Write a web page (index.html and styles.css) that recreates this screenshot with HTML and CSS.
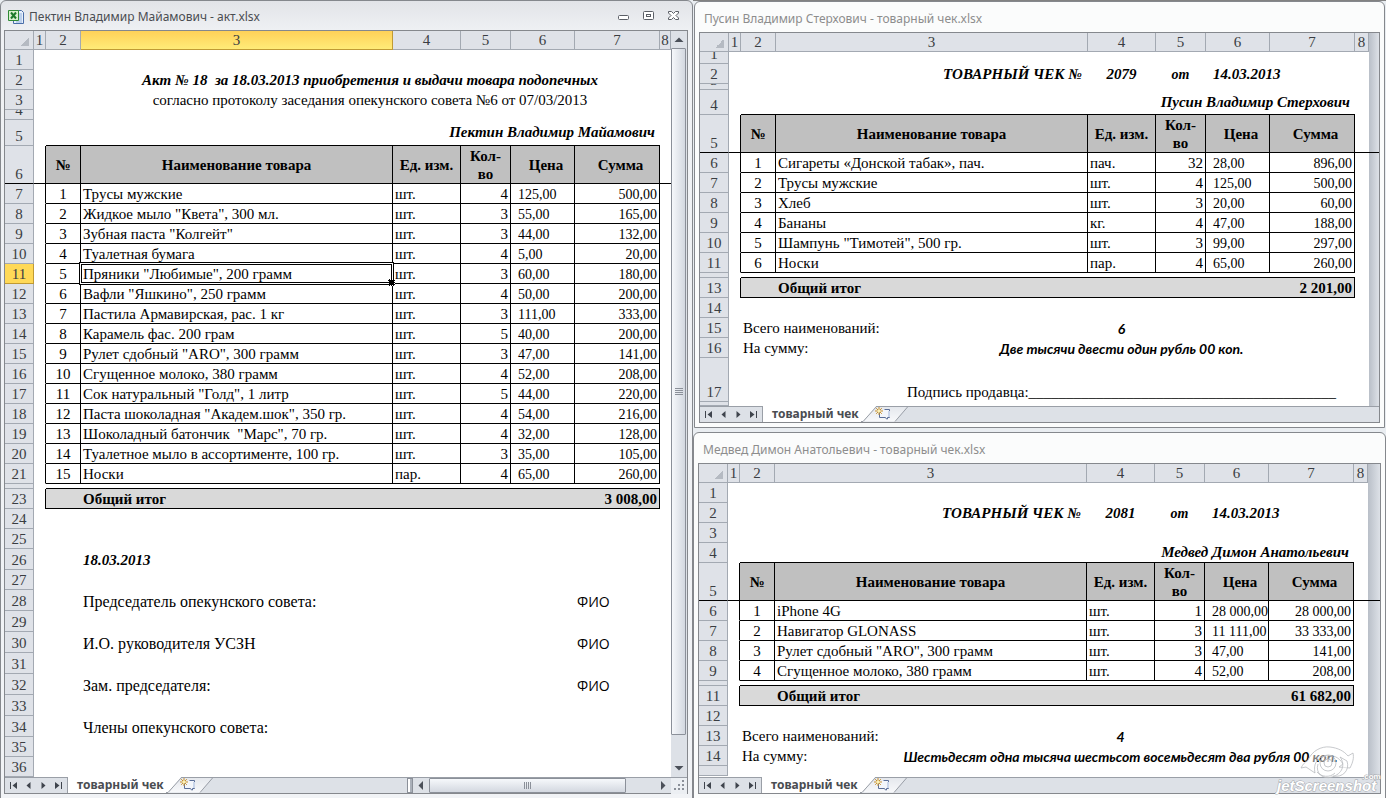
FILE: index.html
```html
<!DOCTYPE html>
<html lang="ru">
<head>
<meta charset="utf-8">
<title>Акт и товарные чеки</title>
<link rel="stylesheet" href="styles.css">
</head>
<body>
<svg width="0" height="0" class="defs" aria-hidden="true">
  <defs>
    <symbol id="i-first" viewBox="0 0 9 9"><path d="M1 1h1v7H1zM8 1v7L3.500 4.500z"/></symbol>
    <symbol id="i-prev" viewBox="0 0 9 9"><path d="M6.500 1v7L2.500 4.500z"/></symbol>
    <symbol id="i-next" viewBox="0 0 9 9"><path d="M2.500 1v7L6.500 4.500z"/></symbol>
    <symbol id="i-last" viewBox="0 0 9 9"><path d="M7 1h1v7H7zM1 1v7L5.500 4.500z"/></symbol>
    <linearGradient id="newtab" x1="0" y1="0" x2="0" y2="1"><stop offset="0" stop-color="#e4e7ec"/><stop offset="1" stop-color="#f8f9fb"/></linearGradient>
    <symbol id="i-new" viewBox="0 0 48 16">
      <path d="M0 0h15L2 16H0z" fill="#fff"/>
      <path d="M15 .5h31L34 15.500H3z" fill="url(#newtab)"/>
      <path d="M15 .5h33" stroke="#9a9fa7"/>
      <path d="M0 15.500h2L15.500.5M34 15.500 47 .5" fill="none" stroke="#9a9fa7"/>
      <path d="M18.500 5.500v6h6l1 1.500h1v-1.500h2v-8h-5" fill="#f3f6fb" stroke="#5b6f99"/>
      <path d="M27 5h2v6h-2z" fill="#c9d5ea"/>
      <path d="M18 1v8M14 5h8M15.200 2.200l5.600 5.600M20.800 2.200l-5.600 5.600" stroke="#c8902c"/>
      <circle cx="18" cy="5" r="1.500" fill="#fff3b0"/>
    </symbol>
  </defs>
</svg>

<main class="desktop">
  <section class="window active" aria-label="акт.xlsx">
    <header class="title">
      <svg class="app" viewBox="0 0 16 16" width="16" height="16">
        <path d="M5.500 1.500h8l2 2v11h-10z" fill="#e8f0fb" stroke="#4a6ea9"/>
        <path d="M10 5h4M10 7h4M10 9h4M8 11h6M8 13h6" stroke="#8fb0de"/>
        <path d="M.5 1.500h10v10H.5z" fill="#d9f0cf" stroke="#2f8a34"/>
        <path d="M3 3.500l5 6M8 3.500l-5 6" stroke="#1d7a2b" stroke-width="2"/>
      </svg>
      <h1>Пектин Владимир Майамович - акт.xlsx</h1>
      <div class="controls">
        <button aria-label="Свернуть"><svg width="13" height="12"><rect x="1.500" y="5.500" width="10" height="4" rx="1" fill="#fff" stroke="#5b5f66"/></svg></button>
        <button aria-label="Развернуть"><svg width="13" height="12"><rect x="1.500" y="1.500" width="10" height="8" rx="1" fill="#fff" stroke="#5b5f66"/><rect x="4.500" y="4.500" width="4" height="2" fill="none" stroke="#5b5f66"/></svg></button>
        <button aria-label="Закрыть"><svg width="13" height="12"><path d="M1.500 1.500h3l2 2 2-2h3v1.500L9 5.500 11.500 8v1.500h-3l-2-2-2 2h-3V8L4 5.500 1.500 3z" fill="#fff" stroke="#5b5f66"/></svg></button>
      </div>
    </header>
    <div class="pane">
      <div class="view">
        <table class="sheet">
          <colgroup><col class="rh"><col class="c1"><col class="c2"><col><col class="c4"><col class="c5"><col class="c6"><col class="c7"><col class="c8"></colgroup>
          <thead><tr><th class="corner"></th><th>1</th><th>2</th><th class="on">3</th><th>4</th><th>5</th><th>6</th><th>7</th><th>8</th></tr></thead>
          <tbody>
            <tr><th>1</th></tr>
            <tr><th>2</th><td></td><td></td><td colspan="5" class="mid em">Акт № 18&nbsp; за 18.03.2013 приобретения и выдачи товара подопечных</td></tr>
            <tr><th>3</th><td></td><td></td><td colspan="5" class="mid">согласно протоколу заседания опекунского совета №6 от 07/03/2013</td></tr>
            <tr class="h10"><th><span class="clip">4</span></th></tr>
            <tr class="h26"><th>5</th><td></td><td colspan="6" class="line end em">Пектин Владимир Майамович</td></tr>
            <tr class="head"><th>6</th><td></td><th scope="col">№</th><th scope="col">Наименование товара</th><th scope="col">Ед. изм.</th><th scope="col">Кол-<br>во</th><th scope="col" class="ind">Цена</th><th scope="col" class="ind">Сумма</th><td></td></tr>
            <tr class="item"><th>7</th><td></td><td>1</td><td>Трусы мужские</td><td>шт.</td><td>4</td><td>125,00</td><td>500,00</td></tr>
            <tr class="item"><th>8</th><td></td><td>2</td><td>Жидкое мыло "Квета", 300 мл.</td><td>шт.</td><td>3</td><td>55,00</td><td>165,00</td></tr>
            <tr class="item"><th>9</th><td></td><td>3</td><td>Зубная паста "Колгейт"</td><td>шт.</td><td>3</td><td>44,00</td><td>132,00</td></tr>
            <tr class="item"><th>10</th><td></td><td>4</td><td>Туалетная бумага</td><td>шт.</td><td>4</td><td>5,00</td><td>20,00</td></tr>
            <tr class="item"><th class="on">11</th><td></td><td>5</td><td class="selected">Пряники "Любимые", 200 грамм</td><td>шт.</td><td>3</td><td>60,00</td><td>180,00</td></tr>
            <tr class="item"><th>12</th><td></td><td>6</td><td>Вафли "Яшкино", 250 грамм</td><td>шт.</td><td>4</td><td>50,00</td><td>200,00</td></tr>
            <tr class="item"><th>13</th><td></td><td>7</td><td>Пастила Армавирская, рас. 1 кг</td><td>шт.</td><td>3</td><td>111,00</td><td>333,00</td></tr>
            <tr class="item"><th>14</th><td></td><td>8</td><td>Карамель фас. 200 грам</td><td>шт.</td><td>5</td><td>40,00</td><td>200,00</td></tr>
            <tr class="item"><th>15</th><td></td><td>9</td><td>Рулет сдобный "ARO", 300 грамм</td><td>шт.</td><td>3</td><td>47,00</td><td>141,00</td></tr>
            <tr class="item"><th>16</th><td></td><td>10</td><td>Сгущенное молоко, 380 грамм</td><td>шт.</td><td>4</td><td>52,00</td><td>208,00</td></tr>
            <tr class="item"><th>17</th><td></td><td>11</td><td>Сок натуральный "Голд", 1 литр</td><td>шт.</td><td>5</td><td>44,00</td><td>220,00</td></tr>
            <tr class="item"><th>18</th><td></td><td>12</td><td>Паста шоколадная "Академ.шок", 350 гр.</td><td>шт.</td><td>4</td><td>54,00</td><td>216,00</td></tr>
            <tr class="item"><th>19</th><td></td><td>13</td><td>Шоколадный батончик&nbsp; "Марс", 70 гр.</td><td>шт.</td><td>4</td><td>32,00</td><td>128,00</td></tr>
            <tr class="item"><th>20</th><td></td><td>14</td><td>Туалетное мыло в ассортименте, 100 гр.</td><td>шт.</td><td>3</td><td>35,00</td><td>105,00</td></tr>
            <tr class="item"><th>21</th><td></td><td>15</td><td>Носки</td><td>пар.</td><td>4</td><td>65,00</td><td>260,00</td></tr>
            <tr class="gap"><th></th><td></td><td colspan="6" class="line"></td></tr>
            <tr class="total"><th>23</th><td></td><td></td><td colspan="2">Общий итог</td><td colspan="3">3 008,00</td></tr>
            <tr><th>24</th></tr>
            <tr><th>25</th></tr>
            <tr class="h21"><th>26</th><td></td><td></td><td class="em">18.03.2013</td></tr>
            <tr><th>27</th></tr>
            <tr class="h21 sign"><th>28</th><td></td><td></td><td colspan="4">Председатель опекунского совета:</td><td class="sans">ФИО</td></tr>
            <tr class="h21"><th>29</th></tr>
            <tr class="h21 sign"><th>30</th><td></td><td></td><td colspan="4">И.О. руководителя УСЗН</td><td class="sans">ФИО</td></tr>
            <tr class="h21"><th>31</th></tr>
            <tr class="h21 sign"><th>32</th><td></td><td></td><td colspan="4">Зам. председателя:</td><td class="sans">ФИО</td></tr>
            <tr class="h21"><th>33</th></tr>
            <tr class="h21 sign"><th>34</th><td></td><td></td><td colspan="4">Члены опекунского совета:</td></tr>
            <tr><th>35</th></tr>
            <tr><th>36</th></tr>
          </tbody>
        </table>
        <div class="vscroll">
          <button aria-label="Вверх"><svg width="16" height="17"><path d="M8 6.500 12.500 11h-9z" fill="#4b5059"/></svg></button>
          <div class="vthumb"><svg width="8" height="8"><path d="M0 .5h8M0 2.500h8M0 4.500h8M0 6.500h8" stroke="#8b9099"/></svg></div>
          <div class="vtrack"></div>
          <button aria-label="Вниз"><svg width="16" height="17"><path d="M3.500 6h9L8 10.500z" fill="#4b5059"/></svg></button>
        </div>
      </div>
      <footer class="strip">
        <nav class="tabnav"><button aria-label="Первый лист"><svg><use href="#i-first"/></svg></button><button aria-label="Предыдущий лист"><svg><use href="#i-prev"/></svg></button><button aria-label="Следующий лист"><svg><use href="#i-next"/></svg></button><button aria-label="Последний лист"><svg><use href="#i-last"/></svg></button></nav>
        <button class="tab">товарный чек</button>
        <button class="newtab" aria-label="Вставить лист"><svg><use href="#i-new"/></svg></button>
        <div class="rail"></div>
        <div class="hscroll">
          <span class="splitter"></span>
          <button aria-label="Влево"><svg width="16" height="16"><path d="M10 3v9L5.500 7.500z" fill="#4b5059"/></svg></button>
          <div class="hthumb"><svg width="8" height="7"><path d="M.5 0v7M2.500 0v7M4.500 0v7M6.500 0v7" stroke="#8b9099"/></svg></div>
          <div class="htrack"></div>
          <button aria-label="Вправо"><svg width="16" height="16"><path d="M6 3v9l4.500-4.500z" fill="#4b5059"/></svg></button>
          <svg class="grip" width="16" height="16"><path d="M11 2h2v2h-2zM7 6h2v2H7zM11 6h2v2h-2zM3 10h2v2H3zM7 10h2v2H7zM11 10h2v2h-2z" fill="#8b9099"/></svg>
        </div>
      </footer>
    </div>
  </section>

  <div class="stack">
    <section class="window upper" aria-label="Пусин - товарный чек.xlsx">
      <header class="title"><h1>Пусин Владимир Стерхович - товарный чек.xlsx</h1></header>
      <div class="pane">
        <table class="sheet">
          <colgroup><col class="rh"><col class="c1"><col class="c2"><col><col class="c4"><col class="c5"><col class="c6"><col class="c7"><col class="c8"><col class="gutter"></colgroup>
          <thead><tr><th class="corner"></th><th>1</th><th>2</th><th>3</th><th>4</th><th>5</th><th>6</th><th>7</th><th>8</th></tr></thead>
          <tbody>
            <tr class="h12"><th><span class="clip">1</span></th></tr>
            <tr><th>2</th><td></td><td></td><td class="em end">ТОВАРНЫЙ ЧЕК №</td><td class="em mid">2079</td><td class="em mid small">от</td><td colspan="2" class="em ind">14.03.2013</td></tr>
            <tr class="h6"><th><span class="clip">3</span></th></tr>
            <tr class="h25"><th>4</th><td></td><td colspan="6" class="line end em">Пусин Владимир Стерхович</td></tr>
            <tr class="head"><th>5</th><td></td><th scope="col">№</th><th scope="col">Наименование товара</th><th scope="col">Ед. изм.</th><th scope="col">Кол-<br>во</th><th scope="col" class="ind">Цена</th><th scope="col" class="ind">Сумма</th><td></td><td></td></tr>
            <tr class="item"><th>6</th><td></td><td>1</td><td>Сигареты «Донской табак», пач.</td><td>пач.</td><td>32</td><td>28,00</td><td>896,00</td></tr>
            <tr class="item"><th>7</th><td></td><td>2</td><td>Трусы мужские</td><td>шт.</td><td>4</td><td>125,00</td><td>500,00</td></tr>
            <tr class="item"><th>8</th><td></td><td>3</td><td>Хлеб</td><td>шт.</td><td>3</td><td>20,00</td><td>60,00</td></tr>
            <tr class="item"><th>9</th><td></td><td>4</td><td>Бананы</td><td>кг.</td><td>4</td><td>47,00</td><td>188,00</td></tr>
            <tr class="item"><th>10</th><td></td><td>5</td><td>Шампунь "Тимотей", 500 гр.</td><td>шт.</td><td>3</td><td>99,00</td><td>297,00</td></tr>
            <tr class="item"><th>11</th><td></td><td>6</td><td>Носки</td><td>пар.</td><td>4</td><td>65,00</td><td>260,00</td></tr>
            <tr class="gap"><th></th><td></td><td colspan="6" class="line"></td></tr>
            <tr class="total"><th>13</th><td></td><td></td><td colspan="2">Общий итог</td><td colspan="3">2 201,00</td></tr>
            <tr><th>14</th></tr>
            <tr><th>15</th><td></td><td colspan="2">Всего наименований:</td><td><div class="spill words">6</div></td></tr>
            <tr><th>16</th><td></td><td colspan="2">На сумму:</td><td><div class="spill words">Две тысячи двести один рубль 00 коп.</div></td></tr>
            <tr class="h44"><th>17</th><td></td><td colspan="2"></td><td><div class="spill">Подпись продавца:_________________________________________</div></td></tr>
            <tr class="h4"><th></th></tr>
          </tbody>
        </table>
        <footer class="strip">
          <nav class="tabnav"><button aria-label="Первый лист"><svg><use href="#i-first"/></svg></button><button aria-label="Предыдущий лист"><svg><use href="#i-prev"/></svg></button><button aria-label="Следующий лист"><svg><use href="#i-next"/></svg></button><button aria-label="Последний лист"><svg><use href="#i-last"/></svg></button></nav>
          <button class="tab">товарный чек</button>
          <button class="newtab" aria-label="Вставить лист"><svg><use href="#i-new"/></svg></button>
          <div class="rail"></div>
        </footer>
      </div>
    </section>

    <section class="window lower" aria-label="Медвед - товарный чек.xlsx">
      <header class="title"><h1>Медвед Димон Анатольевич - товарный чек.xlsx</h1></header>
      <div class="pane">
        <table class="sheet">
          <colgroup><col class="rh"><col class="c1"><col class="c2"><col><col class="c4"><col class="c5"><col class="c6"><col class="c7"><col class="c8"><col class="gutter"></colgroup>
          <thead><tr><th class="corner"></th><th>1</th><th>2</th><th>3</th><th>4</th><th>5</th><th>6</th><th>7</th><th>8</th></tr></thead>
          <tbody>
            <tr><th>1</th></tr>
            <tr><th>2</th><td></td><td></td><td class="em end">ТОВАРНЫЙ ЧЕК №</td><td class="em mid">2081</td><td class="em mid small">от</td><td colspan="2" class="em ind">14.03.2013</td></tr>
            <tr><th>3</th></tr>
            <tr><th>4</th><td></td><td colspan="6" class="line end em">Медвед Димон Анатольевич</td></tr>
            <tr class="head"><th>5</th><td></td><th scope="col">№</th><th scope="col">Наименование товара</th><th scope="col">Ед. изм.</th><th scope="col">Кол-<br>во</th><th scope="col" class="ind">Цена</th><th scope="col" class="ind">Сумма</th><td></td><td></td></tr>
            <tr class="item"><th>6</th><td></td><td>1</td><td>iPhone 4G</td><td>шт.</td><td>1</td><td>28 000,00</td><td>28 000,00</td></tr>
            <tr class="item"><th>7</th><td></td><td>2</td><td>Навигатор GLONASS</td><td>шт.</td><td>3</td><td>11 111,00</td><td>33 333,00</td></tr>
            <tr class="item"><th>8</th><td></td><td>3</td><td>Рулет сдобный "ARO", 300 грамм</td><td>шт.</td><td>3</td><td>47,00</td><td>141,00</td></tr>
            <tr class="item"><th>9</th><td></td><td>4</td><td>Сгущенное молоко, 380 грамм</td><td>шт.</td><td>4</td><td>52,00</td><td>208,00</td></tr>
            <tr class="gap"><th></th><td></td><td colspan="6" class="line"></td></tr>
            <tr class="total"><th>11</th><td></td><td></td><td colspan="2">Общий итог</td><td colspan="3">61 682,00</td></tr>
            <tr><th>12</th></tr>
            <tr><th>13</th><td></td><td colspan="2">Всего наименований:</td><td><div class="spill words">4</div></td></tr>
            <tr><th>14</th><td></td><td colspan="2">На сумму:</td><td><div class="spill words">Шестьдесят одна тысяча шестьсот восемьдесят два рубля 00 коп.</div></td></tr>
            <tr class="h10"><th></th></tr>
          </tbody>
        </table>
        <footer class="strip">
          <nav class="tabnav"><button aria-label="Первый лист"><svg><use href="#i-first"/></svg></button><button aria-label="Предыдущий лист"><svg><use href="#i-prev"/></svg></button><button aria-label="Следующий лист"><svg><use href="#i-next"/></svg></button><button aria-label="Последний лист"><svg><use href="#i-last"/></svg></button></nav>
          <button class="tab">товарный чек</button>
          <button class="newtab" aria-label="Вставить лист"><svg><use href="#i-new"/></svg></button>
          <div class="rail"></div>
        </footer>
      </div>
      <svg class="mark" viewBox="0 0 110 54" width="110" height="54">
        <g fill="#fff" fill-opacity=".5" stroke="#b4b7bb" stroke-opacity=".75">
          <path d="M33 16C37 7 46 2 55 3c8 1 14 4 18 9l5-3c1 5 0 9-3 15l-11-1 4-3c-4-7-11-10-18-8-8 2-12 8-10 17l-9-6-5 1c2-4 4-6 7-8z"/>
          <path d="M43 20c-3 9 5 16 14 13 10-3 14-12 8-20l7 4c3 9-4 17-14 15M42 28c4 5 13 6 18 1"/>
          <circle cx="53" cy="19" r="8"/><circle cx="53" cy="19" r="4"/>
        </g>
        <text class="mark-name" x="2" y="47">jetScreenshot</text>
        <text class="mark-com" x="87" y="35">.com</text>
      </svg>
    </section>
  </div>
</main>
</body>
</html>
```
FILE: styles.css
```css
* { box-sizing: border-box; }
body { margin: 0; background: #e9edf1; font: 15px/17px "Liberation Serif", serif; color: #000; }
.defs { position: absolute; }
button { margin: 0; padding: 0; border: 0; background: none; font: inherit; color: inherit; }
svg { display: block; }

.desktop { display: grid; grid-template-columns: 1fr 1fr; min-height: 100vh; }
.stack { display: flex; flex-direction: column; gap: 4px; border-top: 1px solid #828282; }

.window { position: relative; display: flex; flex-direction: column; padding: 0 4px 4px; border: 1px solid #85888d; border-radius: 6px 6px 0 0; background: #fbfcfc; }
.window.active { padding-left: 3px; background: linear-gradient(#e2e4e8, #eff1f4 31px, #f1f3f6); }
.window.upper { margin: 0 1px; }
.window.lower { flex: 1; }
.title { display: flex; align-items: center; gap: 5px; height: 30px; padding: 4px 5px 0; font-family: "Noto Sans", "Open Sans", sans-serif; }
.active .title { height: 29px; padding: 2px 4px 0; }
.title h1 { flex: 1; margin: 0; font-size: 12px; font-weight: 400; line-height: 18px; color: #8d8d8d; }
.active .title h1 { color: #4a4d52; }
.controls { display: flex; gap: 12px; padding: 0 4px 2px 0; }

.pane { flex: 1; display: flex; flex-direction: column; border: 1px solid #85888d; background: #fff; }
.view { flex: 1; display: flex; align-items: stretch; }
.view .sheet { flex: 1; width: 0; align-self: flex-start; }

.sheet { width: 100%; table-layout: fixed; border-collapse: separate; border-spacing: 0; background: #fff; }
.stack .sheet { background: linear-gradient(to right, #b9bfc8, #dde1e7) right / 12px 100% no-repeat #fff; }
.stack .upper .sheet { background-size: 10px 100%; }
.rh { width: 29px; }
.c1 { width: 12px; }
.c2 { width: 35px; }
.c4 { width: 68px; }
.c5 { width: 50px; }
.c6 { width: 64px; }
.c7 { width: 85px; }
.c8 { width: 11px; }
.stack .c8 { width: 14px; }
.gutter { width: 12px; }
.upper .gutter { width: 10px; }

.sheet tr { height: 20px; }
.sheet th, .sheet td { padding: 0; border: solid transparent; border-width: 0 1px 1px 0; font-weight: 400; white-space: nowrap; }
.sheet td { padding: 0 2px; text-align: left; vertical-align: bottom; }
.sheet thead tr { height: 19px; }
.sheet thead th { padding-top: 1px; background: #dfe2e8; border-color: #a3a9b2; color: #3a3d42; }
.sheet thead th.on { background: linear-gradient(#ffd158, #ffeb78); border-color: #c09a34; }
.sheet thead th.corner { background: linear-gradient(135deg, transparent 50%, #b5bac2 50%) 15px 6px / 9px 9px no-repeat #dfe2e8; }
.sheet tbody th:first-child { background: #dfe2e8; border-color: #a3a9b2; color: #3a3d42; vertical-align: bottom; }
.sheet tbody th.on:first-child { background: #ffd957; border-color: #c09a34; }

.sheet .h4 { height: 4px; }
.sheet .gap { height: 5px; }
.sheet .h6 { height: 6px; }
.sheet .h10 { height: 10px; }
.sheet .h12 { height: 12px; }
.sheet .h21 { height: 21px; }
.sheet .h25 { height: 25px; }
.sheet .h26 { height: 26px; }
.sheet .h44 { height: 44px; }
.gap th, .gap td, .h4 th, .h10 th { line-height: 0; }
.clip { display: flex; align-items: flex-end; justify-content: center; overflow: hidden; line-height: 17px; }
.h6 .clip { height: 5px; }
.h10 .clip { height: 9px; }
.h12 .clip { height: 11px; }

.sheet .line { border-right-width: 0; border-bottom-color: #000; vertical-align: middle; }
.sheet .mid { text-align: center; }
.sheet .end { padding-right: 5px; text-align: right; }
.sheet .ind { padding-left: 7px; }
.sheet .em { font-weight: 700; font-style: italic; }
.sheet .small { font-size: 14px; }
.sheet .sign td { font-size: 16px; }
.sheet .sign .sans { font: 14px/17px "Open Sans", sans-serif; }

.sheet .head { height: 38px; }
.sheet .head td { border-right-width: 0; border-bottom-color: #000; }
.sheet .head td:nth-child(2) { border-right: 1px solid #000; }
.sheet .head th[scope] { background: #c0c0c0; border-color: #000; font-weight: 700; line-height: 18px; }
.sheet tbody .head th:first-child { border-bottom-color: #000; }

.sheet .item td { border-color: #000; }
.sheet .item td:nth-child(2) { border-bottom-color: transparent; }
.sheet .item td:nth-child(3) { text-align: center; }
.sheet .item td:nth-child(6) { text-align: right; }
.sheet .item td:nth-child(7) { padding: 0 0 0 7px; font-size: 14px; }
.sheet .item td:nth-child(8) { text-align: right; font-size: 14px; }

.selected { position: relative; }
.selected::before { content: ""; position: absolute; inset: -2px; border: 1px solid #000; box-shadow: inset 0 0 0 1px #fff, inset 0 0 0 2px #000; }
.selected::after { content: ""; position: absolute; right: -3px; bottom: -3px; width: 5px; height: 5px; border: 1px dotted #fff; background: #000; }

.sheet .total td { background: #d9d9d9; border-right-width: 0; border-bottom-color: #000; font-weight: 700; }
.sheet .total td:nth-child(2) { background: none; border-right: 1px solid #000; border-bottom-width: 0; }
.sheet .total td:last-child { border-right: 1px solid #000; text-align: right; }

.spill { display: flex; justify-content: center; }
.words { font: italic 700 14px/17px Lato, "Open Sans", sans-serif; }

.strip { display: flex; height: 16px; margin-top: auto; background: #dde1e7; }
.tabnav { display: flex; width: 63px; padding-left: 1px; border: solid #9a9fa7; border-width: 1px 1px 0 0; }
.tabnav button { display: grid; place-items: center; width: 15px; }
.tabnav svg { width: 9px; height: 9px; fill: #3f444d; }
.tab { padding: 0 2px 0 9px; background: #fff; font: 700 12px/16px "Noto Sans", sans-serif; color: #4a4d52; }
.newtab svg { width: 48px; height: 16px; }
.rail { flex: 1; border-top: 1px solid #9a9fa7; }

.vscroll { display: flex; flex-direction: column; width: 16px; background: #dde1e7; }
.vscroll button { height: 17px; }
.vthumb { flex: 1; display: grid; place-items: center; width: 15px; border: 1px solid #8b9099; border-radius: 1px; background: linear-gradient(to right, #f6f8fb, #d3d8e0); }
.vtrack { height: 25px; }
.hscroll { display: flex; width: 41%; border-top: 1px solid #9a9fa7; }
.splitter { width: 6px; border: 1px solid #8b9099; background: linear-gradient(to right, #fff 50%, #aab0b9 50%); }
.hthumb { flex: 1; display: grid; place-items: center; border: 1px solid #8b9099; border-radius: 1px; background: linear-gradient(#f6f8fb, #d3d8e0); }
.htrack { width: 29px; }
.grip { background: #eceff3; }

.mark { position: absolute; right: 0; bottom: 0; }
.mark text { font-family: "Liberation Sans", sans-serif; font-weight: 700; fill: #fff; stroke: #a3a6aa; paint-order: stroke; }
.mark-name { font-size: 15px; font-style: italic; }
.mark-com { font-size: 8px; }
```
